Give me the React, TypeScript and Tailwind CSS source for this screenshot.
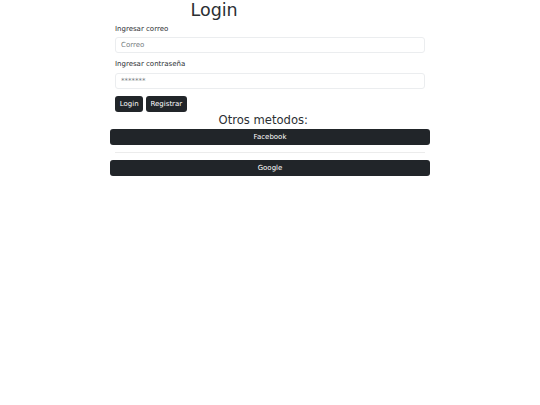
export default function App() {
  return (
    <div className="min-h-[405px] bg-white text-[#2b2f33] font-['DejaVu_Sans',sans-serif]">
      <div className="ml-[110px] w-[320px] flex flex-col">
        {/* Title */}
        <h1 className="pl-[80.5px] text-[17.5px] leading-[20px] h-[20px] font-normal">Login</h1>

        {/* Form */}
        <form className="ml-[5px] w-[310px] flex flex-col">
          <label className="mt-[3.5px] text-[7px] leading-[10.5px]">Ingresar correo</label>
          <input
            type="email"
            placeholder="Correo"
            className="mt-[3px] h-[16px] px-[5px] text-[7px] border border-[#ebedef] rounded-[3px] outline-none placeholder:text-[#757b80]"
          />
          <label className="mt-[6px] text-[7px] leading-[10.5px]">Ingresar contraseña</label>
          <input
            type="password"
            placeholder="*******"
            className="mt-[3.5px] h-[16px] px-[5px] text-[7px] border border-[#ebedef] rounded-[3px] outline-none placeholder:text-[#757b80]"
          />
          <div className="mt-[7px] flex gap-[2.5px]">
            <button type="button" className="h-[16px] px-[4.8px] bg-[#212529] text-white text-[7px] rounded-[3px]">
              Login
            </button>
            <button type="button" className="h-[16px] px-[4.5px] bg-[#212529] text-white text-[7px] rounded-[3px]">
              Registrar
            </button>
          </div>
        </form>

        {/* Other methods */}
        <h3 className="mt-[1px] pl-[108.5px] text-[11.6px] leading-[14.4px] font-normal">Otros metodos:</h3>
        <button type="button" className="mt-[2px] h-[16px] w-full bg-[#212529] text-white text-[7px] rounded-[3px]">
          Facebook
        </button>
        <hr className="mt-[6.5px] mx-[5px] border-0 border-t border-[#ececec]" />
        <button type="button" className="mt-[7px] h-[16px] w-full bg-[#212529] text-white text-[7px] rounded-[3px]">
          Google
        </button>
      </div>
    </div>
  );
}
